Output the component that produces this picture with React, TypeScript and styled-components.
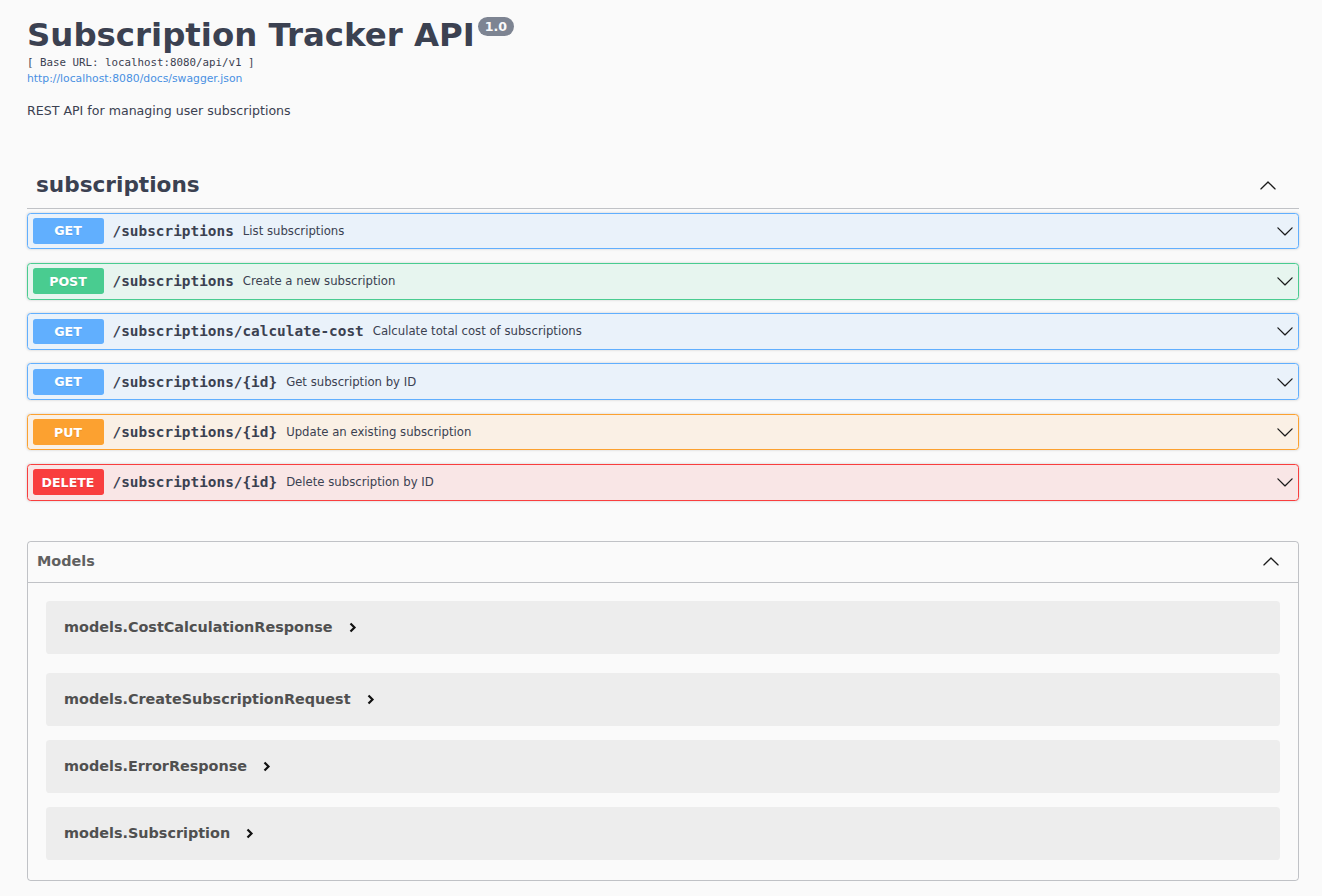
import React from "react";
import styled, { createGlobalStyle, css } from "styled-components";

const GlobalStyle = createGlobalStyle`
  html, body {
    margin: 0;
    padding: 0;
    background: #fafafa;
  }
  body {
    font-family: "DejaVu Sans", sans-serif;
    color: #3b4151;
  }
  * { box-sizing: border-box; }
`;

type Method = "get" | "post" | "put" | "delete";

const methodColors: Record<Method, { main: string; bg: string }> = {
  get: { main: "#61affe", bg: "rgba(97,175,254,.1)" },
  post: { main: "#49cc90", bg: "rgba(73,204,144,.1)" },
  put: { main: "#fca130", bg: "rgba(252,161,48,.1)" },
  delete: { main: "#f93e3e", bg: "rgba(249,62,62,.1)" },
};

const Page = styled.div`
  padding: 0 23px 0 27px;
`;

const Info = styled.div`
  padding-top: 15.5px;
  margin-bottom: 43.5px;
`;

const Title = styled.h2`
  margin: 0;
  display: flex;
  align-items: flex-start;
  font-size: 32.4px;
  font-weight: 700;
  line-height: normal;
  color: #3b4151;
  font-family: "DejaVu Sans", sans-serif;
`;

const VersionBadge = styled.span`
  display: inline-block;
  margin: 1.5px 0 0 3px;
  padding: 2px 7px;
  border-radius: 57px;
  background: #7d8492;
  color: #fafafa;
  font-size: 12.6px;
  font-weight: 700;
  line-height: normal;
`;

const BaseUrl = styled.pre`
  margin: 2px 0 0;
  font-family: "DejaVu Sans Mono", monospace;
  font-size: 10.8px;
  line-height: normal;
  color: #3b4151;
`;

const SpecLink = styled.a`
  display: block;
  margin-top: 3.5px;
  font-size: 10.8px;
  line-height: normal;
  color: #4990e2;
  text-decoration: none;
`;

const Description = styled.p`
  margin: 18px 0 0;
  font-size: 12.6px;
  line-height: normal;
  color: #3b4151;
`;

const TagHeader = styled.h3`
  margin: 0 0 4px;
  height: 47px;
  display: flex;
  align-items: center;
  justify-content: space-between;
  padding: 0 22px 0 9px;
  border-bottom: 1px solid rgba(59, 65, 81, 0.3);
  font-size: 21.6px;
  font-weight: 700;
  line-height: normal;
  color: #3b4151;
`;

const ArrowIcon = styled.svg`
  width: 18px;
  height: 18px;
  flex-shrink: 0;
  fill: #1b1b1b;
`;

const OpList = styled.div`
  display: flex;
  flex-direction: column;
  gap: 13.5px;
`;

const Opblock = styled.div<{ $method: Method }>`
  display: flex;
  align-items: center;
  padding: 4.5px;
  border-radius: 3.6px;
  box-shadow: 0 0 2.7px rgba(0, 0, 0, 0.19);
  ${({ $method }) => css`
    border: 1px solid ${methodColors[$method].main};
    background: ${methodColors[$method].bg};
  `}
`;

const MethodBadge = styled.span<{ $method: Method }>`
  min-width: 71px;
  padding: 5.4px 0;
  border-radius: 2.7px;
  text-align: center;
  font-size: 12.6px;
  font-weight: 700;
  line-height: normal;
  color: #fff;
  text-shadow: 0 1px 0 rgba(0, 0, 0, 0.1);
  background: ${({ $method }) => methodColors[$method].main};
`;

const Path = styled.span`
  padding: 0 9px;
  font-family: "DejaVu Sans Mono", monospace;
  font-size: 14.4px;
  font-weight: 700;
  color: #3b4151;
  white-space: nowrap;
`;

const Summary = styled.span`
  flex: 1;
  font-size: 11.7px;
  color: #3b4151;
`;

const Models = styled.section`
  margin-top: 40px;
  border: 1px solid rgba(59, 65, 81, 0.3);
  border-radius: 3.6px;
`;

const ModelsHeader = styled.h4`
  margin: 0;
  height: 41px;
  display: flex;
  align-items: center;
  justify-content: space-between;
  padding: 0 18px 2px 9px;
  border-bottom: 1px solid rgba(59, 65, 81, 0.3);
  font-size: 14.4px;
  font-weight: 700;
  color: #606060;
`;

const ModelsBody = styled.div`
  display: flex;
  flex-direction: column;
  gap: 14px;
  padding: 18px 18px 20px;
`;

const ModelContainer = styled.div<{ $first?: boolean }>`
  height: 53px;
  display: flex;
  align-items: center;
  padding: 0 18px;
  border-radius: 3.6px;
  background: rgba(0, 0, 0, 0.05);
  margin-bottom: ${({ $first }) => ($first ? "5px" : "0")};
`;

const ModelTitle = styled.span`
  font-size: 14.4px;
  font-weight: 700;
  color: #505050;
`;

const ModelToggle = styled.svg`
  width: 8px;
  height: 11px;
  margin-left: 16px;
  margin-top: 1px;
  fill: none;
  stroke: #111;
  stroke-width: 2.2;
`;

const ArrowDown = () => (
  <ArrowIcon viewBox="0 0 20 20">
    <path d="M17.418 6.109c.272-.268.709-.268.979 0s.271.701 0 .969l-7.908 7.83c-.27.268-.707.268-.979 0l-7.908-7.83c-.27-.268-.27-.701 0-.969.271-.268.709-.268.979 0L10 13.25l7.418-7.141z" />
  </ArrowIcon>
);

const ArrowUp = () => (
  <ArrowIcon viewBox="0 0 20 20">
    <path d="M17.418 14.908c.272.268.709.268.979 0s.271-.701 0-.969l-7.908-7.83c-.27-.268-.707-.268-.979 0l-7.908 7.83c-.27.268-.27.701 0 .969.271.268.709.268.979 0L10 7.767l7.418 7.141z" />
  </ArrowIcon>
);

const ops: { method: Method; path: string; summary: string }[] = [
  { method: "get", path: "/subscriptions", summary: "List subscriptions" },
  { method: "post", path: "/subscriptions", summary: "Create a new subscription" },
  { method: "get", path: "/subscriptions/calculate-cost", summary: "Calculate total cost of subscriptions" },
  { method: "get", path: "/subscriptions/{id}", summary: "Get subscription by ID" },
  { method: "put", path: "/subscriptions/{id}", summary: "Update an existing subscription" },
  { method: "delete", path: "/subscriptions/{id}", summary: "Delete subscription by ID" },
];

const models = [
  "models.CostCalculationResponse",
  "models.CreateSubscriptionRequest",
  "models.ErrorResponse",
  "models.Subscription",
];

export default function App() {
  return (
    <>
      <GlobalStyle />
      <Page>
        <Info>
          <Title>
            <span>Subscription Tracker API</span>
            <VersionBadge>1.0</VersionBadge>
          </Title>
          <BaseUrl>[ Base URL: localhost:8080/api/v1 ]</BaseUrl>
          <SpecLink href="#">http://localhost:8080/docs/swagger.json</SpecLink>
          <Description>REST API for managing user subscriptions</Description>
        </Info>

        <section>
          <TagHeader>
            <span>subscriptions</span>
            <ArrowUp />
          </TagHeader>
          <OpList>
            {ops.map((op, i) => (
              <Opblock key={i} $method={op.method}>
                <MethodBadge $method={op.method}>{op.method.toUpperCase()}</MethodBadge>
                <Path>{op.path}</Path>
                <Summary>{op.summary}</Summary>
                <ArrowDown />
              </Opblock>
            ))}
          </OpList>
        </section>

        <Models>
          <ModelsHeader>
            <span>Models</span>
            <ArrowUp />
          </ModelsHeader>
          <ModelsBody>
            {models.map((m, i) => (
              <ModelContainer key={m} $first={i === 0}>
                <ModelTitle>{m}</ModelTitle>
                <ModelToggle viewBox="0 0 8 11">
                  <polyline points="1.5,1.5 5.5,5.5 1.5,9.5" />
                </ModelToggle>
              </ModelContainer>
            ))}
          </ModelsBody>
        </Models>
      </Page>
    </>
  );
}
